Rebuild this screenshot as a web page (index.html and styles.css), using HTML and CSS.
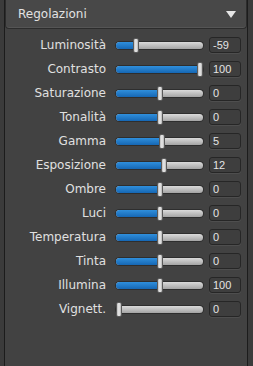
FILE: index.html
```html
<!DOCTYPE html>
<html lang="it">
<head>
    <meta charset="UTF-8">
    <title>Regolazioni</title>
    <link rel="stylesheet" href="styles.css">
</head>
<body>
    <div class="panel">
        <div class="panel-header">
            <span class="panel-title">Regolazioni</span>
            <span class="arrow"></span>
        </div>
        <div class="rows">
            <div class="row"><span class="label">Luminosità</span><div class="track"><div class="fill" style="width: 20px"></div><div class="thumb" style="left: 17px"></div></div><div class="value">-59</div></div>
            <div class="row"><span class="label">Contrasto</span><div class="track"><div class="fill" style="width: 84px"></div><div class="thumb" style="left: 81px"></div></div><div class="value">100</div></div>
            <div class="row"><span class="label">Saturazione</span><div class="track"><div class="fill" style="width: 44px"></div><div class="thumb" style="left: 41px"></div></div><div class="value">0</div></div>
            <div class="row"><span class="label">Tonalità</span><div class="track"><div class="fill" style="width: 44px"></div><div class="thumb" style="left: 41px"></div></div><div class="value">0</div></div>
            <div class="row"><span class="label">Gamma</span><div class="track"><div class="fill" style="width: 46px"></div><div class="thumb" style="left: 43px"></div></div><div class="value">5</div></div>
            <div class="row"><span class="label">Esposizione</span><div class="track"><div class="fill" style="width: 48px"></div><div class="thumb" style="left: 45px"></div></div><div class="value">12</div></div>
            <div class="row"><span class="label">Ombre</span><div class="track"><div class="fill" style="width: 44px"></div><div class="thumb" style="left: 41px"></div></div><div class="value">0</div></div>
            <div class="row"><span class="label">Luci</span><div class="track"><div class="fill" style="width: 44px"></div><div class="thumb" style="left: 41px"></div></div><div class="value">0</div></div>
            <div class="row"><span class="label">Temperatura</span><div class="track"><div class="fill" style="width: 44px"></div><div class="thumb" style="left: 41px"></div></div><div class="value">0</div></div>
            <div class="row"><span class="label">Tinta</span><div class="track"><div class="fill" style="width: 44px"></div><div class="thumb" style="left: 41px"></div></div><div class="value">0</div></div>
            <div class="row"><span class="label">Illumina</span><div class="track"><div class="fill" style="width: 44px"></div><div class="thumb" style="left: 41px"></div></div><div class="value">100</div></div>
            <div class="row"><span class="label">Vignett.</span><div class="track"><div class="thumb" style="left: 0px"></div></div><div class="value">0</div></div>
        </div>
    </div>
</body>
</html>
```
FILE: styles.css
```css
html, body {
    height: 100%;
}
body {
    margin: 0;
    background-color: #3b3b3b;
    font-family: "DejaVu Sans", Verdana, sans-serif;
    font-size: 12px;
    color: #e0e0e0;
}
.panel {
    box-sizing: border-box;
    height: 100%;
    margin: 0 5px 0 4px;
    border-left: 1px solid #1c1c1c;
    border-right: 1px solid #1c1c1c;
    background-color: #424242;
}
.panel-header {
    box-sizing: border-box;
    height: 29px;
    display: flex;
    align-items: center;
    justify-content: space-between;
    padding: 0 10px 0 12px;
    background-color: #484848;
    border: 1px solid #2c2c2c;
    border-top: none;
    border-radius: 0 0 4px 4px;
    box-shadow: inset 0 -1px 0 #555;
}
.panel-title {
    color: #e2e2e2;
}
.arrow {
    width: 0;
    height: 0;
    border-left: 5px solid transparent;
    border-right: 5px solid transparent;
    border-top: 7px solid #e6e6e6;
}
.rows {
    padding-top: 4px;
}
.row {
    height: 24px;
    display: flex;
    align-items: center;
}
.label {
    width: 101px;
    text-align: right;
    margin-right: 10px;
    white-space: nowrap;
}
.track {
    position: relative;
    width: 87px;
    height: 7px;
    border-radius: 4px;
    background: linear-gradient(#dadada, #a4a4a4);
    box-shadow: 0 0 0 1px #2e2e2e;
}
.fill {
    height: 100%;
    border-radius: 4px 0 0 4px;
    background: linear-gradient(#2f8fdc, #1667b4);
}
.thumb {
    position: absolute;
    top: -4px;
    width: 6px;
    height: 15px;
    box-sizing: border-box;
    border-radius: 2px;
    border: 1px solid #5a5a5a;
    background: linear-gradient(90deg, #bdbdbd, #ececec 50%, #b5b5b5);
}
.value {
    box-sizing: border-box;
    width: 32px;
    height: 16px;
    margin-left: 6px;
    padding-left: 3px;
    border: 1px solid #262626;
    border-radius: 3px;
    background-color: #3e3e3e;
    box-shadow: 0 1px 0 #4e4e4e;
    font-family: "Liberation Sans", Arial, sans-serif;
    font-size: 11px;
    line-height: 14px;
    color: #e4e4e4;
}
```
